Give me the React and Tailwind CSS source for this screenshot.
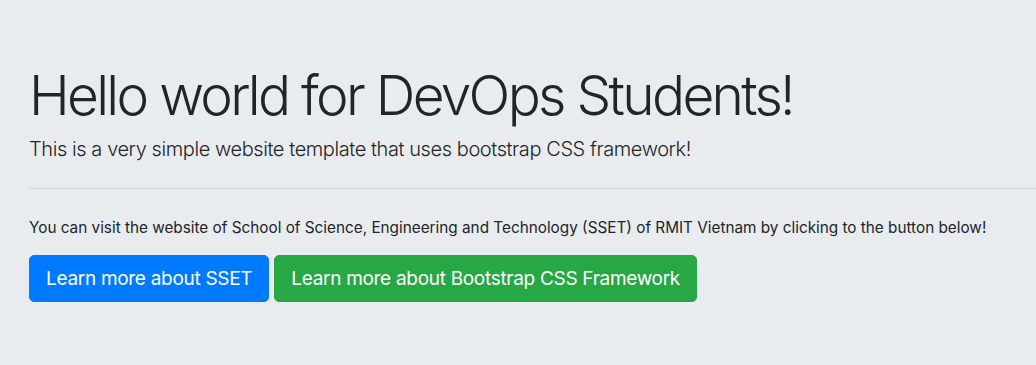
export default function App() {
  return (
    <div className="min-h-[365px] w-full overflow-hidden bg-[#e9ecef] px-[29px] pt-[62px] pb-[64px] text-[#212529] font-['Inter','Liberation_Sans',sans-serif]">
      <h1 className="whitespace-nowrap text-[55px] font-light leading-[1.2] tracking-[-2.7px]">
        Hello world for DevOps Students!
      </h1>
      <p className="mt-[6px] whitespace-nowrap text-[20px] font-light leading-[1.5] tracking-[-0.42px]">
        This is a very simple website template that uses bootstrap CSS framework!
      </p>
      <hr className="-mr-[29px] mt-[24px] mb-[28px] border-0 border-t border-black/10" />
      <p className="mb-[15px] whitespace-nowrap text-[15.3px] leading-[1.5]">
        You can visit the website of School of Science, Engineering and Technology (SSET) of RMIT Vietnam by clicking to the button below!
      </p>
      <div className="flex gap-[5px]">
        <a
          href="#"
          className="inline-block rounded-[5px] border border-[#007bff] bg-[#007bff] px-4 py-2 text-[19px] leading-[29px] tracking-[-0.3px] text-white"
        >
          Learn more about SSET
        </a>
        <a
          href="#"
          className="inline-block rounded-[5px] border border-[#28a745] bg-[#28a745] px-4 py-2 text-[19px] leading-[29px] tracking-[-0.3px] text-white"
        >
          Learn more about Bootstrap CSS Framework
        </a>
      </div>
    </div>
  );
}
